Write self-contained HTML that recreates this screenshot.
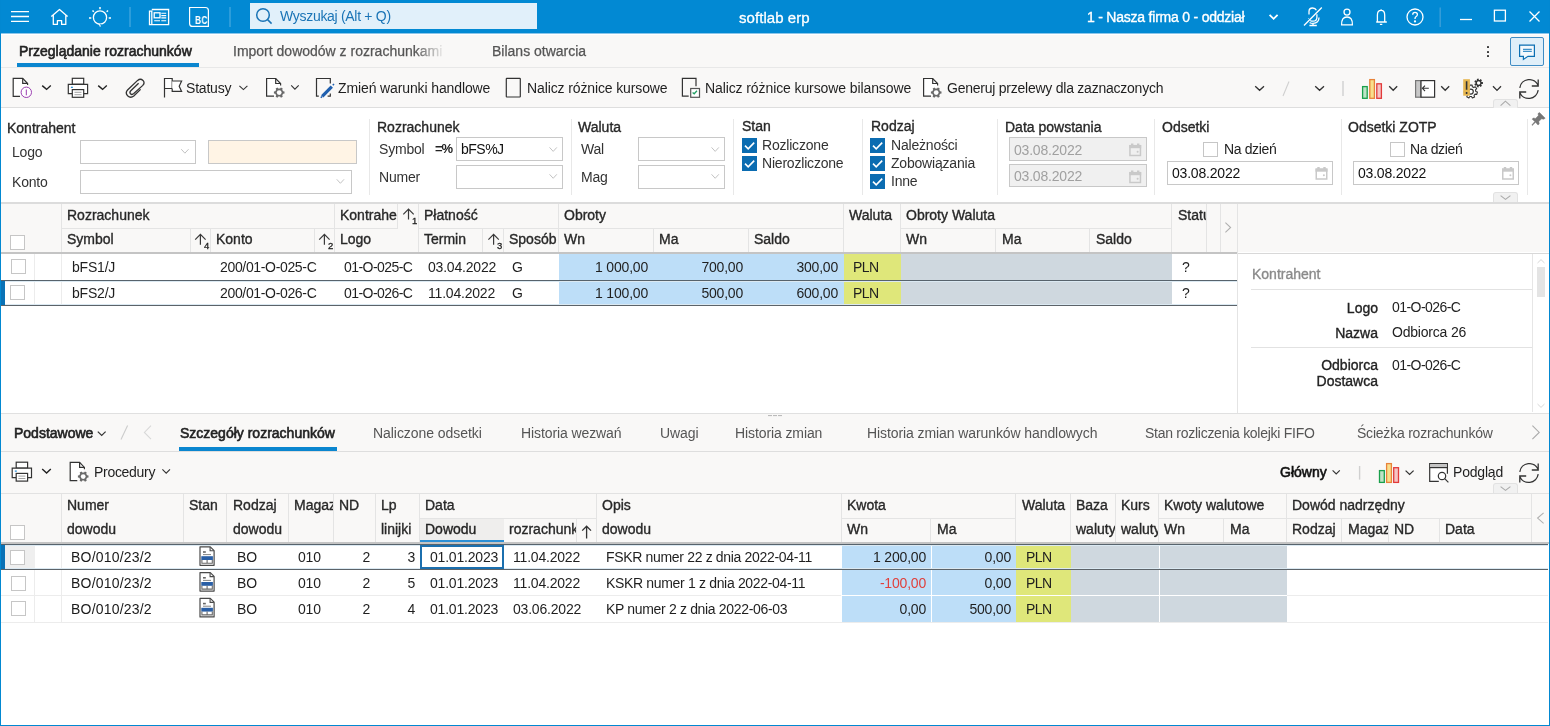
<!DOCTYPE html>
<html><head><meta charset="utf-8">
<style>
html,body{margin:0;padding:0}
body{width:1550px;height:726px;position:relative;overflow:hidden;background:#fff;font-family:"Liberation Sans",sans-serif;font-size:14px;color:#1f1f1f}
.a{position:absolute}
.t{position:absolute;white-space:nowrap;line-height:16px;font-size:14px;letter-spacing:-0.2px;will-change:transform}
.m{font-size:14px;color:#282828;-webkit-text-stroke-width:0.35px;letter-spacing:0}
.mb{-webkit-text-stroke-width:0.6px}
.g{color:#555}
.r{text-align:right}
svg{position:absolute;overflow:visible}
.hl{position:absolute;height:1px;background:#e6e6e6}
.vl{position:absolute;width:1px;background:#e6e6e6}
.cb{position:absolute;width:13px;height:13px;border:1px solid #c6c6c6;background:#fff}
.cbc{position:absolute;width:15px;height:15px;background:#0b6cb1}
.inp{position:absolute;border:1px solid #c8c8c8;background:#fff;box-sizing:border-box}
.chev{position:absolute}
</style></head><body>

<!-- window border -->
<div class="a" style="left:0;top:0;width:1px;height:726px;background:#0288d1;z-index:50"></div>
<div class="a" style="left:1549px;top:0;width:1px;height:726px;background:#0288d1;z-index:50"></div>
<div class="a" style="left:0;top:725px;width:1550px;height:1px;background:#0288d1;z-index:50"></div>

<!-- TITLE BAR -->

<div class="a" style="left:0;top:0;width:1550px;height:33px;background:#0289d3"></div>
<svg style="left:0;top:0" width="1550" height="33" fill="none" stroke="#fff" stroke-width="1.3">
 <path d="M11 11.6H29M11 16.5H29M11 21.3H29"/>
 <path d="M51.3 16.6L59.5 9.4L67.6 16.6M53.3 15V24.4H57.4V20.6H61.6V24.4H65.8V15" stroke-linejoin="round"/>
 <circle cx="100" cy="17.5" r="6.6"/>
 <path d="M100 7V9.2M92.5 10.5L93.8 11.8M108 10.5L106.7 11.8M89 18H91.3M108.7 18H111" stroke-width="1.5"/>
 <path d="M100 24.3L100.8 26.6" stroke="#0289d3" stroke-width="2.4"/>
 <path d="M98.6 24.2Q100.3 24.6 100.2 26.6"/>
 <path d="M130 7V27M230 7V27" stroke="#4aaae0" stroke-width="1.2"/>
 <path d="M151.8 9.5H168.6V24.6H149.5V11.2H151.8V24.6"/>
 <rect x="154.2" y="12.8" width="5.8" height="5" />
 <path d="M161.3 13.2H166.2M161.3 15.6H166.2M161.3 17.9H166.2M154.2 20.8H160M161.3 20.8H166.2" stroke-width="1.1"/>
 <path d="M189.6 7.5H205.4Q208.4 7.5 208.4 10.5V26.4H192.6Q189.6 26.4 189.6 23.4Z" stroke-width="1.2"/>
 <path d="M1304 25.5L1321.8 7.5"/>
 <path d="M1309 14.5V11.5Q1309 8 1312.6 8Q1315.4 8 1316.4 10.2M1316.9 14.2V17.4Q1316.9 21 1313 21.2Q1311.2 21.2 1310.2 20.4M1308.6 18.2L1308.4 18.6"/>
 <path d="M1319 17.6Q1319 23.2 1313 23.4Q1310.9 23.4 1309.6 22.4M1313 23.4V25.4M1309.4 25.5H1316.8"/>
 <circle cx="1347" cy="12.1" r="3"/>
 <path d="M1341.6 24.9H1352.4Q1352.6 17 1347 17Q1341.4 17 1341.6 24.9Z"/>
 <path d="M1376.2 22H1386.8M1377.4 22V15.2Q1377.4 10.4 1381.1 10.4Q1384.7 10.4 1384.7 15.2V22M1381.1 9.2V10.4M1379.9 24.4H1382.3"/>
 <circle cx="1415" cy="17" r="8"/>
 <path d="M1412.7 14.8Q1412.7 12.4 1415 12.4Q1417.4 12.4 1417.4 14.6Q1417.4 16 1415.9 16.8Q1415 17.4 1415 18.9"/>
 <circle cx="1415" cy="21.4" r="0.5" fill="#fff"/>
 <path d="M1440.2 7.5V27" stroke="#3a9fd9" stroke-width="1.4"/>
 <path d="M1460 19.5H1472"/>
 <rect x="1494.4" y="10.2" width="11" height="10.8"/>
 <path d="M1529.5 11.5L1539.5 21.5M1539.5 11.5L1529.5 21.5"/>
 <path d="M1269.6 14.8L1273.6 18.8L1277.6 14.8" stroke-width="1.8"/>
</svg>
<div class="t" style="left:195px;top:15.5px;font-size:10px;font-weight:bold;color:#fff;line-height:10px;letter-spacing:0.2px;transform:scaleX(0.84);transform-origin:0 0">BC</div>
<div class="a" style="left:250px;top:3px;width:287px;height:26px;background:#e1f0fa"></div>
<svg style="left:0;top:0" width="600" height="33" fill="none" stroke="#1a74b6" stroke-width="1.5">
 <circle cx="263" cy="15" r="6.3"/><path d="M267.6 19.6L271.6 23.6"/>
</svg>
<div class="t" style="left:280px;top:8px;color:#1a74b6;font-size:14px;letter-spacing:-0.3px">Wyszukaj (Alt + Q)</div>
<div class="t" style="left:739px;top:9.6px;color:#fff;font-size:15px;letter-spacing:0.05px;-webkit-text-stroke-width:0.3px">softlab erp</div>
<div class="t" style="left:1087px;top:9px;color:#fff;font-size:14px;letter-spacing:-0.22px;-webkit-text-stroke-width:0.35px">1 - Nasza firma 0 - oddział</div>


<!-- TABS -->
<div class="a" style="left:1px;top:33px;width:1548px;height:34px;background:#f9f8f7"></div>
<div class="hl" style="left:1px;top:67px;width:1548px;background:#e8e8e8"></div>

<!-- TOOLBAR -->
<div class="a" style="left:1px;top:68px;width:1548px;height:39px;background:#f9f8f7"></div>
<div class="a" style="left:1px;top:107px;width:1548px;height:1px;background:#dedede"></div>


<!-- tabs content -->
<div class="a" style="left:1px;top:33px;width:1548px;height:1px;background:#8cc6ea"></div><div class="a" style="left:1px;top:34px;width:1548px;height:1px;background:#fff"></div>
<div class="t m mb" style="left:19px;top:42.6px;color:#222">Przeglądanie rozrachunków</div>
<div class="a" style="left:17px;top:63px;width:182px;height:4px;background:#0b86cf"></div>
<div class="t g" style="left:233px;top:43px;-webkit-mask-image:linear-gradient(90deg,#000 182px,rgba(0,0,0,0.12) 209px);color:#555;letter-spacing:0;-webkit-text-stroke-width:0.25px">Import dowodów z rozrachunkami</div>
<div class="t g" style="left:492px;top:43px;letter-spacing:0;-webkit-text-stroke-width:0.25px">Bilans otwarcia</div>
<div class="a" style="left:1487px;top:46px;width:2.2px;height:2.2px;background:#3a3a3a;border-radius:0.6px"></div>
<div class="a" style="left:1487px;top:50.5px;width:2.2px;height:2.2px;background:#3a3a3a;border-radius:0.6px"></div>
<div class="a" style="left:1487px;top:55px;width:2.2px;height:2.2px;background:#3a3a3a;border-radius:0.6px"></div>
<div class="a" style="left:1510px;top:37px;width:34px;height:29px;box-sizing:border-box;border:1px solid #3f8cc4;border-radius:2px;background:#e0eff9"></div>
<svg style="left:0;top:0" width="1550" height="110" fill="none" stroke="#0b6fb3" stroke-width="1.2">
 <path d="M1519.6 45.2H1534.4V56.3H1528L1523.4 59.4V56.3H1519.6Z" fill="#f4f9fd"/>
 <path d="M1523 49.4H1531.8M1523 51.3H1531.8" stroke="#3d91c9"/>
</svg>

<!-- toolbar icons -->
<svg style="left:0;top:0" width="1550" height="110" fill="none" stroke="#333" stroke-width="1.2">
 <!-- doc info -->
 <path d="M20 96.3H13.2V78.3H22.7L27.6 83.6V85" fill="#fff"/>
 <path d="M22.7 78.3V83.3H27.4"/>
 <circle cx="26.3" cy="92.3" r="5.2" stroke="#9a3db0" fill="#fff" stroke-width="1"/>
 <path d="M26.3 89.5V95.3" stroke="#9a3db0" stroke-width="1"/>
 <path d="M42.2 85.6L46.6 89.4L50.8 85.6" stroke="#222" stroke-width="1.4"/>
 <!-- printer -->
 <rect x="72.3" y="78.3" width="11.4" height="6" fill="#fff"/>
 <path d="M72.3 93.7H68.3V84.4H87.6V93.7H83.7" fill="#fff"/>
 <rect x="72.3" y="89.6" width="11.4" height="7.7" fill="#fff"/>
 <path d="M74.5 92.3H81.5M74.5 94.7H81.5" stroke="#999" stroke-width="0.9"/>
 <path d="M70.9 87.3H72.9" stroke="#1b86d0" stroke-width="1.2"/>
 <path d="M98.2 85.6L102.6 89.4L106.8 85.6" stroke="#222" stroke-width="1.4"/>
 <!-- paperclip -->
 <path d="M140.6 89.4L133.8 96Q130.6 98.6 127.6 95.8Q124.8 92.8 127.8 89.8L137.6 80.4Q140.4 78 143 80.4Q145.2 83 142.8 85.4L133.8 93.6Q131.9 95.2 130.5 93.8Q129.2 92.4 130.8 90.8L138.6 83.2" stroke-width="1.3"/>
 <!-- flag -->
 <path d="M164.5 97.5V78.5H172.2V88.5H164.5" fill="#fff"/>
 <path d="M172.2 81H181.6L179.2 86.2L181.6 91.4H172.2V88.5" fill="#fff"/>
 <path d="M239.4 85.8L243.4 89.6L247.4 85.8" stroke="#333" stroke-width="1.1"/>
 <!-- doc gear -->
 <path d="M274 96.2H266.6V78.5H275.7L280.6 83.5V85.4" fill="#fff"/>
 <path d="M275.7 78.5V83.5H280.4"/>
 <path d="M291.2 85.3L294.9 89.2L298.7 85.3" stroke-width="1.1"/>
 <!-- doc pen -->
 <path d="M318.8 96.2H316.5V78.5H330.3V83.5M327.6 96.2H330.3V93.6"/>
 <path d="M322.2 96.4L331.8 86.6" stroke="#1f5fae" stroke-width="3.2"/>
 <path d="M320.8 97.8L322 96.5M332.8 85.2L334 84" stroke="#1f5fae" stroke-width="1.6"/>
 <!-- doc rect -->
 <rect x="506.3" y="78.4" width="14" height="18.6" rx="0.5"/>
 <!-- doc check -->
 <path d="M688.7 96.2H682.4V78.4H696V86.3"/>
 <rect x="690.7" y="88.5" width="8.8" height="8.8" fill="#fff" stroke="#555"/>
 <path d="M692.6 92.4L694.2 93.8L697 90.8" stroke="#22a064" stroke-width="1.3"/>
 <!-- doc gear 2 -->
 <path d="M931 96.2H923.6V78.5H932.7L937.6 83.5V85.4" fill="#fff"/>
 <path d="M932.7 78.5V83.5H937.4"/>
 <!-- right chevrons -->
 <path d="M1255.2 86.2L1259.6 90.3L1264 86.2M1315.2 86.2L1319.6 90.3L1324 86.2M1389.2 86.2L1393.2 90.3L1397.2 86.2M1441.2 86.2L1445.2 90.3L1449.2 86.2M1493 86.2L1497 90.4L1501 86.2" stroke="#333" stroke-width="1.3"/>
 <path d="M1289 81.5L1283 96" stroke="#d0d0d0" stroke-width="1.1"/>
 <path d="M1343 81V96" stroke="#d0d0d0" stroke-width="1.4"/>
 <!-- chart -->
 <rect x="1362.6" y="86.6" width="4.6" height="11.7" fill="#bfe3c7" stroke="#1aa04c" stroke-width="1.3"/>
 <rect x="1369.8" y="79.6" width="4.6" height="18.7" fill="#f8df8c" stroke="#e8833a" stroke-width="1.3"/>
 <rect x="1376.8" y="83.8" width="4.6" height="14.5" fill="#f5c4c4" stroke="#e23a3a" stroke-width="1.3"/>
 <!-- panel -->
 <rect x="1415.6" y="80.6" width="5.4" height="16.6" fill="#c8c8c8" stroke="#777"/>
 <rect x="1421" y="80.6" width="13.6" height="16.6" fill="#fff" stroke="#333"/>
 <path d="M1428.8 88.3H1422.6M1425 85.6L1422.4 88.3L1425 91" stroke="#333" stroke-width="1.1"/>
 <!-- refresh -->
 <path d="M1519.8 87.8A9.6 9.6 0 0 1 1538.2 85.6M1538.2 79.4V86H1531.8" stroke="#333" stroke-width="1.3"/>
 <path d="M1538.2 90.2A9.6 9.6 0 0 1 1519.8 92.4M1519.8 98.6V92H1526.2" stroke="#333" stroke-width="1.3"/>
</svg>
<!-- gears (toolbar) -->
<svg style="left:0;top:0" width="1550" height="110">
 <g transform="translate(279.2 92.6)" fill="#6a6a6a"><path id="gearp" d="M3.90 -1.27L5.30 -1.01L5.30 1.01L3.90 1.27L3.05 2.74L3.53 4.09L1.78 5.10L0.85 4.01L-0.85 4.01L-1.78 5.10L-3.53 4.09L-3.05 2.74L-3.90 1.27L-5.30 1.01L-5.30 -1.01L-3.90 -1.27L-3.05 -2.74L-3.53 -4.09L-1.78 -5.10L-0.85 -4.01L0.85 -4.01L1.78 -5.10L3.53 -4.09L3.05 -2.74Z"/><circle r="2.4" fill="#fff"/></g>
 <g transform="translate(936.2 92.6)" fill="#6a6a6a"><use href="#gearp"/><circle r="2.4" fill="#fff"/></g>
 <path d="M1475.80 91.41L1477.38 92.06L1476.80 94.35L1475.10 94.16L1474.06 95.39L1474.54 97.04L1472.39 98.01L1471.48 96.55L1469.87 96.51L1468.88 97.92L1466.79 96.84L1467.35 95.22L1466.38 93.94L1464.67 94.04L1464.20 91.73L1465.82 91.16L1466.22 89.60L1465.07 88.32L1466.59 86.52L1468.04 87.43L1469.51 86.77L1469.79 85.08L1472.14 85.14L1472.34 86.84L1473.77 87.58L1475.27 86.74L1476.69 88.62L1475.48 89.84Z" fill="#fff" stroke="#333" stroke-width="1.1" stroke-linejoin="round"/>
 <circle cx="1470.8" cy="91.6" r="2.5" fill="none" stroke="#333" stroke-width="1.2"/>
 <path d="M1481.55 82.06L1482.91 82.12L1482.91 83.88L1481.55 83.94L1481.18 84.72L1481.98 85.82L1480.60 86.92L1479.70 85.90L1478.86 86.09L1478.50 87.40L1476.78 87.01L1477.02 85.67L1476.35 85.13L1475.10 85.67L1474.33 84.08L1475.53 83.43L1475.53 82.57L1474.33 81.92L1475.10 80.33L1476.35 80.87L1477.02 80.33L1476.78 78.99L1478.50 78.60L1478.86 79.91L1479.70 80.10L1480.60 79.08L1481.98 80.18L1481.18 81.28Z" fill="#333"/>
 <circle cx="1478.6" cy="83" r="1.7" fill="#fff"/>
 <rect x="1463.2" y="79.2" width="6.7" height="16.5" fill="#e6b650"/>
 <path d="M1466.6 81.2V89.8M1466.6 92V94" stroke="#333" stroke-width="1.6"/>
</svg>
<div class="a" style="left:1493px;top:99px;width:25px;height:9px;box-sizing:border-box;border:1px solid #e2e2e2;border-bottom:none;border-radius:3px 3px 0 0;background:#f1f1f1"></div>
<svg style="left:0;top:0" width="1550" height="110" fill="none"><path d="M1500.6 105.6L1505.4 101.2L1510.4 105.6" stroke="#aaa" stroke-width="1.1"/></svg>
<div class="t" style="left:186px;top:80px">Statusy</div>
<div class="t" style="left:338px;top:80px;letter-spacing:-0.12px">Zmień warunki handlowe</div>
<div class="t" style="left:527px;top:80px;letter-spacing:-0.12px">Nalicz różnice kursowe</div>
<div class="t" style="left:704.5px;top:80px;letter-spacing:-0.1px">Nalicz różnice kursowe bilansowe</div>
<div class="t" style="left:947px;top:80px;letter-spacing:-0.24px">Generuj przelewy dla zaznaczonych</div>

<!-- FILTER -->
<div class="t m" style="left:7.4px;top:120px">Kontrahent</div>
<div class="t" style="left:12.3px;top:144px;color:#333">Logo</div>
<div class="inp" style="left:80px;top:140px;width:116px;height:24px;background:#fff"></div>
<div class="inp" style="left:208px;top:140px;width:149px;height:24px;background:#fff4e5"></div>
<div class="t" style="left:12.3px;top:174px;color:#333">Konto</div>
<div class="inp" style="left:80px;top:170px;width:272px;height:24px;background:#fff"></div>
<div class="t m" style="left:376.7px;top:119.3px">Rozrachunek</div>
<div class="t" style="left:379px;top:141px;color:#333">Symbol</div>
<div class="t" style="left:434.5px;top:141px;color:#222;font-weight:bold;font-size:13px;letter-spacing:-1.2px">=%</div>
<div class="inp" style="left:456px;top:137px;width:107px;height:24px;background:#fff"></div>
<div class="t" style="left:461px;top:141px;color:#111;letter-spacing:-0.5px">bFS%J</div>
<div class="t" style="left:379px;top:169px;color:#333">Numer</div>
<div class="inp" style="left:456px;top:165px;width:107px;height:24px;background:#fff"></div>
<div class="t m" style="left:578px;top:119.3px">Waluta</div>
<div class="t" style="left:580.6px;top:141px;color:#333">Wal</div>
<div class="inp" style="left:638px;top:137px;width:87px;height:24px;background:#fff"></div>
<div class="t" style="left:580.6px;top:169px;color:#333">Mag</div>
<div class="inp" style="left:638px;top:165px;width:87px;height:24px;background:#fff"></div>
<div class="t m" style="left:742px;top:118.3px">Stan</div>
<div class="t m" style="left:870.6px;top:118.3px">Rodzaj</div>
<div class="cbc" style="left:742px;top:138px"></div>
<div class="cbc" style="left:742px;top:156px"></div>
<div class="cbc" style="left:870px;top:138px"></div>
<div class="cbc" style="left:870px;top:156px"></div>
<div class="cbc" style="left:870px;top:174px"></div>
<div class="t" style="left:762px;top:136.6px;color:#333">Rozliczone</div>
<div class="t" style="left:762px;top:155px;color:#333">Nierozliczone</div>
<div class="t" style="left:890.6px;top:136.6px;color:#333">Należności</div>
<div class="t" style="left:890.6px;top:155px;color:#333">Zobowiązania</div>
<div class="t" style="left:890.6px;top:173px;color:#333">Inne</div>
<div class="t m" style="left:1004.6px;top:119px">Data powstania</div>
<div class="inp" style="left:1009px;top:137px;width:138px;height:24px;background:#f0f0f0"></div>
<div class="inp" style="left:1009px;top:164px;width:138px;height:23px;background:#f0f0f0"></div>
<div class="t" style="left:1014px;top:141.5px;color:#a0a0a0">03.08.2022</div>
<div class="t" style="left:1014px;top:168px;color:#a0a0a0">03.08.2022</div>
<div class="t m" style="left:1161.7px;top:119px">Odsetki</div>
<div class="cb" style="left:1203px;top:142px"></div>
<div class="t" style="left:1224px;top:140.6px;color:#222;letter-spacing:-0.37px">Na dzień</div>
<div class="inp" style="left:1167px;top:161px;width:166px;height:24px"></div>
<div class="t" style="left:1171.8px;top:165px;color:#111">03.08.2022</div>
<div class="t m" style="left:1347.7px;top:119px">Odsetki ZOTP</div>
<div class="cb" style="left:1390px;top:142px"></div>
<div class="t" style="left:1410px;top:140.6px;color:#222;letter-spacing:-0.37px">Na dzień</div>
<div class="inp" style="left:1353px;top:161px;width:166px;height:24px"></div>
<div class="t" style="left:1357.8px;top:165px;color:#111">03.08.2022</div>
<div class="vl" style="left:369px;top:119px;height:76px;background:#e8e8e8"></div>
<div class="vl" style="left:571px;top:119px;height:76px;background:#e8e8e8"></div>
<div class="vl" style="left:733px;top:119px;height:76px;background:#e8e8e8"></div>
<div class="vl" style="left:862px;top:119px;height:76px;background:#e8e8e8"></div>
<div class="vl" style="left:997px;top:119px;height:76px;background:#e8e8e8"></div>
<div class="vl" style="left:1154px;top:119px;height:76px;background:#e8e8e8"></div>
<div class="vl" style="left:1341px;top:119px;height:76px;background:#e8e8e8"></div>
<div class="vl" style="left:1527px;top:119px;height:76px;background:#e8e8e8"></div>
<svg style="left:0;top:0" width="1550" height="210" fill="none" stroke="#c2c2c2" stroke-width="1"><path d="M181.25 149.20L184.90 153.20L188.55 149.20"/><path d="M336.75 179.30L340.40 183.30L344.05 179.30"/><path d="M549.55 147.40L553.20 151.40L556.85 147.40"/><path d="M549.55 174.30L553.20 178.30L556.85 174.30"/><path d="M711.55 147.40L715.20 151.40L718.85 147.40"/><path d="M711.55 174.30L715.20 178.30L718.85 174.30"/><path d="M745 145.6L748.2 148.8L754.2 142.6" stroke="#fff" stroke-width="1.6"/><path d="M745 163.6L748.2 166.8L754.2 160.6" stroke="#fff" stroke-width="1.6"/><path d="M873 145.6L876.2 148.8L882.2 142.6" stroke="#fff" stroke-width="1.6"/><path d="M873 163.6L876.2 166.8L882.2 160.6" stroke="#fff" stroke-width="1.6"/><path d="M873 181.6L876.2 184.8L882.2 178.6" stroke="#fff" stroke-width="1.6"/></svg>
<svg style="left:0;top:0" width="1550" height="210"><g fill="#777" stroke="#777"><path d="M1539.5 112.6L1545.2 118.2L1543.6 119.2L1541.5 118.8L1538.8 121.6L1539.2 124L1538 125L1535.6 122.3L1532.2 125.4L1531.8 125L1534.8 121.6L1532.2 119.2L1533.2 118L1535.6 118.4L1538.4 115.6L1538 113.6Z" stroke-width="0.5"/></g></svg>
<div class="a" style="left:1493px;top:192px;width:25px;height:10px;box-sizing:border-box;border:1px solid #e2e2e2;border-bottom:none;border-radius:3px 3px 0 0;background:#f1f1f1"></div>
<svg style="left:0;top:0" width="1550" height="210" fill="none"><path d="M1500.6 195.6L1505.5 199.4L1510.4 195.6" stroke="#aaa" stroke-width="1.1"/></svg>
<div class="a" style="left:1px;top:202px;width:1548px;height:2px;background:#dcdcdc"></div>

<!-- GRID1 HEADER -->
<div class="a" style="left:1px;top:204px;width:1548px;height:48px;background:#f9f8f7"></div>
<div class="a" style="left:1px;top:252px;width:1237px;height:2px;background:#c4c4c4"></div>

<svg style="left:0;top:0" width="1550" height="210"><rect x="1129.95" y="145.7" width="10.5" height="9.8" fill="none" stroke="#c9c9c9" stroke-width="1.5"/><rect x="1129.2" y="145.0" width="12" height="3.2" fill="#c9c9c9"/><rect x="1131.0" y="143.5" width="2.4" height="2" fill="#c9c9c9"/><rect x="1137.0" y="143.5" width="2.4" height="2" fill="#c9c9c9"/><circle cx="1137.6000000000001" cy="151.7" r="1" fill="#c9c9c9"/><rect x="1129.95" y="172.7" width="10.5" height="9.8" fill="none" stroke="#c9c9c9" stroke-width="1.5"/><rect x="1129.2" y="172.0" width="12" height="3.2" fill="#c9c9c9"/><rect x="1131.0" y="170.5" width="2.4" height="2" fill="#c9c9c9"/><rect x="1137.0" y="170.5" width="2.4" height="2" fill="#c9c9c9"/><circle cx="1137.6000000000001" cy="178.7" r="1" fill="#c9c9c9"/><rect x="1316.25" y="169.2" width="10.5" height="9.8" fill="none" stroke="#c9c9c9" stroke-width="1.5"/><rect x="1315.5" y="168.5" width="12" height="3.2" fill="#c9c9c9"/><rect x="1317.3" y="167" width="2.4" height="2" fill="#c9c9c9"/><rect x="1323.3" y="167" width="2.4" height="2" fill="#c9c9c9"/><circle cx="1323.9" cy="175.2" r="1" fill="#c9c9c9"/><rect x="1502.75" y="169.2" width="10.5" height="9.8" fill="none" stroke="#c9c9c9" stroke-width="1.5"/><rect x="1502" y="168.5" width="12" height="3.2" fill="#c9c9c9"/><rect x="1503.8" y="167" width="2.4" height="2" fill="#c9c9c9"/><rect x="1509.8" y="167" width="2.4" height="2" fill="#c9c9c9"/><circle cx="1510.4" cy="175.2" r="1" fill="#c9c9c9"/></svg>
<!-- GRID1 -->

<div class="vl" style="left:61px;top:204px;height:48px;background:#e4e4e4"></div>
<div class="vl" style="left:190px;top:228px;height:24px;background:#e4e4e4"></div>
<div class="vl" style="left:210px;top:228px;height:24px;background:#e4e4e4"></div>
<div class="vl" style="left:314px;top:228px;height:24px;background:#e4e4e4"></div>
<div class="vl" style="left:334px;top:204px;height:48px;background:#e4e4e4"></div>
<div class="vl" style="left:397px;top:204px;height:24px;background:#e4e4e4"></div>
<div class="vl" style="left:418px;top:204px;height:48px;background:#e4e4e4"></div>
<div class="vl" style="left:482px;top:228px;height:24px;background:#e4e4e4"></div>
<div class="vl" style="left:503px;top:228px;height:24px;background:#e4e4e4"></div>
<div class="vl" style="left:558px;top:204px;height:48px;background:#e4e4e4"></div>
<div class="vl" style="left:653px;top:228px;height:24px;background:#e4e4e4"></div>
<div class="vl" style="left:748px;top:228px;height:24px;background:#e4e4e4"></div>
<div class="vl" style="left:843px;top:204px;height:48px;background:#e4e4e4"></div>
<div class="vl" style="left:900px;top:204px;height:48px;background:#e4e4e4"></div>
<div class="vl" style="left:995px;top:228px;height:24px;background:#e4e4e4"></div>
<div class="vl" style="left:1089px;top:228px;height:24px;background:#e4e4e4"></div>
<div class="vl" style="left:1171px;top:204px;height:48px;background:#e4e4e4"></div>
<div class="vl" style="left:1206px;top:204px;height:48px;background:#e4e4e4"></div>
<div class="vl" style="left:1220px;top:204px;height:48px;background:#e4e4e4"></div>
<div class="vl" style="left:1237px;top:204px;height:209px;background:#e4e4e4"></div>
<div class="hl" style="left:61px;top:228px;width:273.5px;background:#e4e4e4"></div>
<div class="hl" style="left:418.5px;top:228px;width:140.0px;background:#e4e4e4"></div>
<div class="hl" style="left:558.5px;top:228px;width:285.0px;background:#e4e4e4"></div>
<div class="hl" style="left:900.5px;top:228px;width:271.0px;background:#e4e4e4"></div>
<div class="hl" style="left:334.5px;top:228px;width:63px;background:#e4e4e4"></div>
<div class="t m" style="left:67.3px;top:207.2px;">Rozrachunek</div>
<div class="t m" style="left:67.3px;top:231.4px;">Symbol</div>
<div class="t m" style="left:216.4px;top:231.4px;">Konto</div>
<div class="a" style="left:335px;top:204px;width:62px;height:24px;overflow:hidden"><div class="t m" style="left:5.4px;top:3.2px">Kontrahent</div></div>
<div class="t m" style="left:340.4px;top:231.4px;">Logo</div>
<div class="t m" style="left:424px;top:207.2px;">Płatność</div>
<div class="t m" style="left:424px;top:231.4px;">Termin</div>
<div class="t m" style="left:508.8px;top:231.4px;">Sposób</div>
<div class="t m" style="left:563.5px;top:207.2px;">Obroty</div>
<div class="t m" style="left:564px;top:231.4px;">Wn</div>
<div class="t m" style="left:659px;top:231.4px;">Ma</div>
<div class="t m" style="left:754px;top:231.4px;">Saldo</div>
<div class="t m" style="left:849px;top:207.2px;">Waluta</div>
<div class="t m" style="left:906.3px;top:207.2px;">Obroty Waluta</div>
<div class="t m" style="left:906.3px;top:231.4px;">Wn</div>
<div class="t m" style="left:1001.5px;top:231.4px;">Ma</div>
<div class="t m" style="left:1095.5px;top:231.4px;">Saldo</div>
<div class="a" style="left:1172px;top:204px;width:34px;height:24px;overflow:hidden"><div class="t m" style="left:5.5px;top:3.2px">Status</div></div>
<div class="cb" style="left:10px;top:235px"></div>
<svg style="left:0;top:0" width="1550" height="420" fill="none" stroke="#3a3a3a" stroke-width="1.2"><path d="M200.4 244.79999999999998V234.5M195.20000000000002 239.6L200.4 234.39999999999998L205.6 239.6"/><path d="M324.4 244.79999999999998V234.5M319.2 239.6L324.4 234.39999999999998L329.59999999999997 239.6"/><path d="M408.5 219.6V209.3M403.3 214.4L408.5 209.2L413.7 214.4"/><path d="M493.6 244.79999999999998V234.5M488.40000000000003 239.6L493.6 234.39999999999998L498.8 239.6"/><path d="M1225.4 222.6L1230.6 227.5L1225.4 232.4" stroke="#b0b0b0" stroke-width="1.1"/></svg>
<div class="t" style="left:204.2px;top:241.4px;font-size:9.5px;line-height:10px;color:#222;-webkit-text-stroke-width:0.3px;letter-spacing:0">4</div><div class="t" style="left:328.2px;top:241.4px;font-size:9.5px;line-height:10px;color:#222;-webkit-text-stroke-width:0.3px;letter-spacing:0">2</div><div class="t" style="left:411.6px;top:216.2px;font-size:9.5px;line-height:10px;color:#222;-webkit-text-stroke-width:0.3px;letter-spacing:0">1</div><div class="t" style="left:497px;top:241.4px;font-size:9.5px;line-height:10px;color:#222;-webkit-text-stroke-width:0.3px;letter-spacing:0">3</div>




<div class="a" style="left:558.5px;top:254px;width:285px;height:51px;background:#bddef8"></div>
<div class="a" style="left:843.5px;top:254px;width:57px;height:51px;background:#dfe77a"></div>
<div class="a" style="left:900.5px;top:254px;width:271px;height:51px;background:#cfd8df"></div>
<div class="vl" style="left:34px;top:254px;height:51px;background:#ececec"></div>
<div class="vl" style="left:61px;top:254px;height:51px;background:#ececec"></div>
<div class="a" style="left:1px;top:280px;width:1236px;height:1px;background:#57636c"></div><div class="a" style="left:5px;top:281px;width:1232px;height:1px;background:#dbe9f2"></div><div class="a" style="left:5px;top:304px;width:1232px;height:1px;background:#dbe9f2"></div>
<div class="a" style="left:1px;top:305px;width:1236px;height:1px;background:#5c6369"></div>
<div class="a" style="left:1px;top:281px;width:4px;height:24px;background:#0a72b6"></div>
<div class="cb" style="left:11px;top:259px"></div>
<div class="cb" style="left:10px;top:285px"></div>
<div class="t" style="left:71.6px;top:259.2px;">bFS1/J</div>
<div class="t" style="left:220.4px;top:259.2px;letter-spacing:-0.34px;">200/01-O-025-C</div>
<div class="t" style="left:343.5px;top:259.2px;letter-spacing:-0.55px;">01-O-025-C</div>
<div class="t" style="left:427.5px;top:259.2px;">03.04.2022</div>
<div class="t" style="left:512.2px;top:259.2px;">G</div>
<div class="t" style="left:448px;width:200px;text-align:right;top:259.2px;">1 000,00</div>
<div class="t" style="left:542.7px;width:200px;text-align:right;top:259.2px;">700,00</div>
<div class="t" style="left:638px;width:200px;text-align:right;top:259.2px;">300,00</div>
<div class="t" style="left:852.6px;top:259.2px;letter-spacing:-0.6px;">PLN</div>
<div class="t" style="left:1181.5px;top:259.2px;">?</div>
<div class="t" style="left:71.6px;top:285px;">bFS2/J</div>
<div class="t" style="left:220.4px;top:285px;letter-spacing:-0.34px;">200/01-O-026-C</div>
<div class="t" style="left:343.5px;top:285px;letter-spacing:-0.55px;">01-O-026-C</div>
<div class="t" style="left:427.5px;top:285px;">11.04.2022</div>
<div class="t" style="left:512.2px;top:285px;">G</div>
<div class="t" style="left:448px;width:200px;text-align:right;top:285px;">1 100,00</div>
<div class="t" style="left:542.7px;width:200px;text-align:right;top:285px;">500,00</div>
<div class="t" style="left:638px;width:200px;text-align:right;top:285px;">600,00</div>
<div class="t" style="left:852.6px;top:285px;letter-spacing:-0.6px;">PLN</div>
<div class="t" style="left:1181.5px;top:285px;">?</div>
<div class="a" style="left:1238px;top:253px;width:311px;height:1px;background:#d8d8d8"></div>
<div class="a" style="left:1238px;top:254px;width:311px;height:159px;background:#fff"></div>
<div class="t m" style="left:1251.5px;top:265.7px;color:#8a8a8a">Kontrahent</div>
<div class="hl" style="left:1251px;top:289px;width:281px;background:#e2e2e2"></div>
<div class="hl" style="left:1251px;top:347px;width:281px;background:#e2e2e2"></div>
<div class="t m" style="left:1178px;width:200px;text-align:right;top:299.5px;color:#222">Logo</div>
<div class="t m" style="left:1178px;width:200px;text-align:right;top:324.5px;color:#222">Nazwa</div>
<div class="t m" style="left:1178px;width:200px;text-align:right;top:357.3px;color:#222">Odbiorca</div>
<div class="t m" style="left:1178px;width:200px;text-align:right;top:372.8px;color:#222">Dostawca</div>
<div class="t" style="left:1391.5px;top:299.2px;color:#222;letter-spacing:-0.55px">01-O-026-C</div>
<div class="t" style="left:1391.5px;top:324.2px;color:#222">Odbiorca 26</div>
<div class="t" style="left:1391.5px;top:357px;color:#222;letter-spacing:-0.55px">01-O-026-C</div>
<div class="vl" style="left:1532px;top:254px;height:158px;background:#e6e6e6"></div>
<div class="a" style="left:1537px;top:267px;width:8px;height:30px;background:#e4e4e4"></div>
<svg style="left:0;top:0" width="1550" height="420" fill="none" stroke="#d6d6d6" stroke-width="1"><path d="M1537.5 263L1541 259.6L1544.5 263M1537.5 404L1541 407.4L1544.5 404"/></svg>
<!-- splitter / bottom tabs -->
<div class="a" style="left:1px;top:413px;width:1548px;height:38px;background:#f9f8f7"></div>
<div class="hl" style="left:1px;top:413px;width:1548px;background:#e0e0e0"></div>
<div class="hl" style="left:1px;top:451px;width:1548px;background:#dedede"></div>
<div class="a" style="left:1px;top:452px;width:1548px;height:41px;background:#f9f8f7"></div>
<div class="hl" style="left:1px;top:493px;width:1548px;background:#e2e2e2"></div>

<!-- BOTTOM TABS+TOOLBAR -->
<div class="t m mb" style="left:13.5px;top:425px;color:#222">Podstawowe</div>
<div class="t m mb" style="left:180px;top:425px;color:#222">Szczegóły rozrachunków</div>
<div class="a" style="left:179px;top:447px;width:158px;height:4px;background:#0b86cf"></div>
<div class="t g" style="left:372.9px;top:425.2px;letter-spacing:-0.05px">Naliczone odsetki</div>
<div class="t g" style="left:521px;top:425.2px;letter-spacing:-0.1px">Historia wezwań</div>
<div class="t g" style="left:659.5px;top:425.2px;letter-spacing:-0.1px">Uwagi</div>
<div class="t g" style="left:735.3px;top:425.2px;letter-spacing:-0.1px">Historia zmian</div>
<div class="t g" style="left:867px;top:425.2px;letter-spacing:-0.09px">Historia zmian warunków handlowych</div>
<div class="t g" style="left:1144.5px;top:425.2px;letter-spacing:-0.27px">Stan rozliczenia kolejki FIFO</div>
<div class="t g" style="left:1356.8px;top:425.2px;letter-spacing:-0.22px">Ścieżka rozrachunków</div>
<svg style="left:0;top:0" width="1550" height="500" fill="none" stroke="#333" stroke-width="1.2"><path d="M97.8 431.6L101.7 435.4L105.6 431.6"/><path d="M127.6 425.4L121 439.4" stroke="#ccc" stroke-width="1.1"/><path d="M151 425.6L144.4 432.4L151 439.2" stroke="#d8d8d8" stroke-width="1.1"/><path d="M1532.4 425.6L1539.2 432.4L1532.4 439.2" stroke="#aaa" stroke-width="1.1"/><path d="M768 415.6H782" stroke="#b4b4b4" stroke-width="1" stroke-dasharray="4 1"/></svg>
<svg style="left:0;top:0" width="1550" height="500" fill="none" stroke="#333" stroke-width="1.2"><rect x="16.2" y="462.2" width="11.4" height="6" fill="#fff"/><path d="M16.2 477.6H12.2V468.2H31.5V477.6H27.6" fill="#fff"/><rect x="16.2" y="473.4" width="11.4" height="7.7" fill="#fff"/><path d="M18.4 476.1H25.4M18.4 478.5H25.4" stroke="#999" stroke-width="0.9"/><path d="M14.8 471.1H16.8" stroke="#1b86d0" stroke-width="1.2"/><path d="M42.2 469L46.6 473L50.8 469" stroke="#222" stroke-width="1.4"/><path d="M77.3 480.6H70.2V462.4H79.6L84.4 467.4V469.2" fill="#fff"/><path d="M79.6 462.4V467.4H84.2"/><path d="M162.4 469.4L166.2 473.2L170 469.4" stroke-width="1.1"/><path d="M1332.6 470.4L1336.2 474L1339.8 470.4" stroke-width="1.1"/><path d="M1359.6 466V479.6" stroke="#d0d0d0" stroke-width="1.4"/><rect x="1379.5" y="470.6" width="4.8" height="11.8" fill="#bfe3c7" stroke="#1aa04c" stroke-width="1.3"/><rect x="1386.6" y="463.6" width="4.8" height="18.8" fill="#f8df8c" stroke="#e8833a" stroke-width="1.3"/><rect x="1393.7" y="467.7" width="4.8" height="14.7" fill="#f5c4c4" stroke="#e23a3a" stroke-width="1.3"/><path d="M1405.6 470.6L1409.6 474.4L1413.6 470.6" stroke-width="1.3"/><path d="M1438.8 481.4H1429.7V463.7H1447.4V473.8" fill="#fff"/><rect x="1430.2" y="464.2" width="16.8" height="3.2" fill="#c4c4c4" stroke="none"/><path d="M1429.7 467.6H1447.4"/><circle cx="1442" cy="476" r="3.7" fill="#fff"/><path d="M1444.7 478.7L1448.4 482.4"/><path d="M1519.8 471.8A9.6 9.6 0 0 1 1538.2 469.6M1538.2 463.4V470H1531.8" stroke-width="1.3"/><path d="M1538.2 474.2A9.6 9.6 0 0 1 1519.8 476.4M1519.8 482.6V476H1526.2" stroke-width="1.3"/></svg>
<svg style="left:0;top:0" width="1550" height="500"><g transform="translate(83.2 476.6)" fill="#6a6a6a"><use href="#gearp"/><circle r="2.4" fill="#fff"/></g></svg>
<div class="t" style="left:94px;top:464px;letter-spacing:-0.3px">Procedury</div>
<div class="t m mb" style="left:1279.6px;top:464.2px;color:#111">Główny</div>
<div class="t" style="left:1452.7px;top:464px;letter-spacing:-0.2px">Podgląd</div>
<div class="a" style="left:1493px;top:483px;width:25px;height:10px;box-sizing:border-box;border:1px solid #e2e2e2;border-bottom:none;border-radius:3px 3px 0 0;background:#f1f1f1"></div>
<svg style="left:0;top:0" width="1550" height="500" fill="none"><path d="M1500.6 486.6L1505.5 490.4L1510.4 486.6" stroke="#aaa" stroke-width="1.1"/></svg>
<!-- GRID2 HEADER -->
<div class="a" style="left:1px;top:494px;width:1548px;height:49px;background:#f9f8f7"></div>
<div class="a" style="left:1px;top:542px;width:1548px;height:2px;background:#c4c4c4"></div>

<!-- GRID2 -->

<div class="vl" style="left:61px;top:494px;height:48px;background:#e4e4e4"></div>
<div class="vl" style="left:183px;top:494px;height:48px;background:#e4e4e4"></div>
<div class="vl" style="left:226px;top:494px;height:48px;background:#e4e4e4"></div>
<div class="vl" style="left:288px;top:494px;height:48px;background:#e4e4e4"></div>
<div class="vl" style="left:333px;top:494px;height:48px;background:#e4e4e4"></div>
<div class="vl" style="left:375px;top:494px;height:48px;background:#e4e4e4"></div>
<div class="vl" style="left:419px;top:494px;height:48px;background:#e4e4e4"></div>
<div class="vl" style="left:503px;top:519px;height:23px;background:#e4e4e4"></div>
<div class="vl" style="left:576px;top:519px;height:23px;background:#e4e4e4"></div>
<div class="vl" style="left:596px;top:494px;height:48px;background:#e4e4e4"></div>
<div class="vl" style="left:841px;top:494px;height:48px;background:#e4e4e4"></div>
<div class="vl" style="left:930px;top:519px;height:23px;background:#e4e4e4"></div>
<div class="vl" style="left:1015px;top:494px;height:48px;background:#e4e4e4"></div>
<div class="vl" style="left:1070px;top:494px;height:48px;background:#e4e4e4"></div>
<div class="vl" style="left:1115px;top:494px;height:48px;background:#e4e4e4"></div>
<div class="vl" style="left:1158px;top:494px;height:48px;background:#e4e4e4"></div>
<div class="vl" style="left:1223px;top:519px;height:23px;background:#e4e4e4"></div>
<div class="vl" style="left:1286px;top:494px;height:48px;background:#e4e4e4"></div>
<div class="vl" style="left:1341px;top:519px;height:23px;background:#e4e4e4"></div>
<div class="vl" style="left:1388px;top:519px;height:23px;background:#e4e4e4"></div>
<div class="vl" style="left:1439px;top:519px;height:23px;background:#e4e4e4"></div>
<div class="vl" style="left:1531px;top:494px;height:48px;background:#e4e4e4"></div>
<div class="hl" style="left:419.5px;top:518px;width:177.0px;background:#e4e4e4"></div>
<div class="hl" style="left:841.5px;top:518px;width:174.0px;background:#e4e4e4"></div>
<div class="hl" style="left:1158.5px;top:518px;width:128.0px;background:#e4e4e4"></div>
<div class="hl" style="left:1286.5px;top:518px;width:245.0px;background:#e4e4e4"></div>
<div class="a" style="left:420px;top:519px;width:83.5px;height:23px;background:#efeeed"></div>
<div class="a" style="left:420px;top:540px;width:83.5px;height:2px;background:#2b8fd6"></div>
<div class="t m" style="left:66.5px;top:497px;">Numer</div>
<div class="t m" style="left:66.5px;top:520.9px;">dowodu</div>
<div class="t m" style="left:189.3px;top:497px;">Stan</div>
<div class="t m" style="left:232.7px;top:497px;">Rodzaj</div>
<div class="t m" style="left:232.7px;top:520.9px;">dowodu</div>
<div class="a" style="left:289px;top:494px;width:44px;height:24px;overflow:hidden"><div class="t m" style="left:5.3px;top:3px">Magazyn</div></div>
<div class="t m" style="left:338.8px;top:497px;">ND</div>
<div class="t m" style="left:381.3px;top:497px;">Lp</div>
<div class="t m" style="left:381.3px;top:520.9px;">linijki</div>
<div class="t m" style="left:425.2px;top:497px;">Data</div>
<div class="t m" style="left:425.2px;top:520.9px;color:#222">Dowodu</div>
<div class="a" style="left:504px;top:519px;width:72px;height:23px;overflow:hidden"><div class="t m" style="left:4.6px;top:1.9px">rozrachunku</div></div>
<div class="t m" style="left:602px;top:497px;">Opis</div>
<div class="t m" style="left:602px;top:520.9px;">dowodu</div>
<div class="t m" style="left:847px;top:497px;">Kwota</div>
<div class="t m" style="left:847px;top:520.9px;">Wn</div>
<div class="t m" style="left:936.8px;top:520.9px;">Ma</div>
<div class="t m" style="left:1021.6px;top:497px;">Waluta</div>
<div class="t m" style="left:1075.8px;top:497px;">Baza</div>
<div class="a" style="left:1071px;top:519px;width:44px;height:23px;overflow:hidden"><div class="t m" style="left:4.8px;top:1.9px">waluty</div></div>
<div class="t m" style="left:1121px;top:497px;">Kurs</div>
<div class="a" style="left:1116px;top:519px;width:42px;height:23px;overflow:hidden"><div class="t m" style="left:5px;top:1.9px">waluty</div></div>
<div class="t m" style="left:1164.3px;top:497px;">Kwoty walutowe</div>
<div class="t m" style="left:1164.3px;top:520.9px;">Wn</div>
<div class="t m" style="left:1229.8px;top:520.9px;">Ma</div>
<div class="t m" style="left:1292.4px;top:497px;">Dowód nadrzędny</div>
<div class="t m" style="left:1292.4px;top:520.9px;">Rodzaj</div>
<div class="a" style="left:1342px;top:519px;width:46px;height:23px;overflow:hidden"><div class="t m" style="left:5.7px;top:1.9px">Magazyn</div></div>
<div class="t m" style="left:1393.5px;top:520.9px;">ND</div>
<div class="t m" style="left:1445px;top:520.9px;">Data</div>
<div class="cb" style="left:10px;top:525px"></div>
<svg style="left:0;top:0" width="1550" height="726" fill="none" stroke="#333" stroke-width="1.3"><path d="M586.6 538.6V526.2M582.2 530.6L586.6 526.2L591 530.6"/><path d="M1543.6 512.8L1537.6 518.1L1543.6 523.4" stroke="#b0b0b0" stroke-width="1.1"/></svg>
<div class="a" style="left:841.5px;top:544px;width:174px;height:78px;background:#bddef8"></div>
<div class="a" style="left:1015.5px;top:544px;width:55px;height:78px;background:#dfe77a"></div>
<div class="a" style="left:1070.5px;top:544px;width:216px;height:78px;background:#cfd8df"></div>
<div class="a" style="left:930.5px;top:544px;width:1.2px;height:78px;background:#fff"></div>
<div class="a" style="left:1158.5px;top:544px;width:1.2px;height:78px;background:#fff"></div>
<div class="a" style="left:841.5px;top:595px;width:445px;height:1.2px;background:#fff"></div>
<div class="vl" style="left:34px;top:544px;height:78px;background:#ececec"></div>
<div class="vl" style="left:61px;top:544px;height:78px;background:#ececec"></div>
<div class="hl" style="left:1px;top:595px;width:840px;background:#ececec"></div>
<div class="hl" style="left:1287px;top:595px;width:261px;background:#ececec"></div>
<div class="hl" style="left:1px;top:621.5px;width:1547px;background:#ececec"></div>
<div class="a" style="left:5px;top:546px;width:30px;height:22px;background:#efefef"></div>
<div class="a" style="left:1px;top:544px;width:1547px;height:1px;background:#57636c"></div><div class="a" style="left:5px;top:545px;width:1543px;height:1px;background:#dbe9f2"></div><div class="a" style="left:5px;top:568px;width:1543px;height:1px;background:#dbe9f2"></div>
<div class="a" style="left:1px;top:569px;width:1547px;height:1px;background:#5c6369"></div>
<div class="a" style="left:1px;top:545px;width:4px;height:24px;background:#0a72b6"></div>
<div class="a" style="left:420px;top:545px;width:83.5px;height:24px;box-sizing:border-box;border:2px solid #1b6fae"></div>

<div class="cb" style="left:10.2px;top:550px"></div>
<div class="t" style="left:70.8px;top:549.2px;color:#1a1a1a;letter-spacing:0.2px">BO/010/23/2</div>
<div class="t" style="left:236.6px;top:549.2px;">BO</div>
<div class="t" style="left:297.5px;top:549.2px;">010</div>
<div class="t" style="left:170px;width:200px;text-align:right;top:549.2px;">2</div>
<div class="t" style="left:215.2px;width:200px;text-align:right;top:549.2px;">3</div>
<div class="t" style="left:429.6px;top:549.2px;">01.01.2023</div>
<div class="t" style="left:513px;top:549.2px;">11.04.2022</div>
<div class="t" style="left:606px;top:549.2px;letter-spacing:-0.33px;">FSKR numer 22 z dnia 2022-04-11</div>
<div class="t" style="left:725.5px;width:200px;text-align:right;top:549.2px;">1 200,00</div>
<div class="t" style="left:811px;width:200px;text-align:right;top:549.2px;">0,00</div>
<div class="t" style="left:1025.5px;top:549.2px;letter-spacing:-0.6px;">PLN</div>
<div class="cb" style="left:10.6px;top:575.6px"></div>
<div class="t" style="left:70.8px;top:575px;color:#1a1a1a;letter-spacing:0.2px">BO/010/23/2</div>
<div class="t" style="left:236.6px;top:575px;">BO</div>
<div class="t" style="left:297.5px;top:575px;">010</div>
<div class="t" style="left:170px;width:200px;text-align:right;top:575px;">2</div>
<div class="t" style="left:215.2px;width:200px;text-align:right;top:575px;">5</div>
<div class="t" style="left:429.6px;top:575px;">01.01.2023</div>
<div class="t" style="left:513px;top:575px;">11.04.2022</div>
<div class="t" style="left:606px;top:575px;letter-spacing:-0.33px;">KSKR numer 1 z dnia 2022-04-11</div>
<div class="t" style="left:725.5px;width:200px;text-align:right;top:575px;color:#e0403c;">-100,00</div>
<div class="t" style="left:811px;width:200px;text-align:right;top:575px;">0,00</div>
<div class="t" style="left:1025.5px;top:575px;letter-spacing:-0.6px;">PLN</div>
<div class="cb" style="left:10.6px;top:601.4px"></div>
<div class="t" style="left:70.8px;top:600.6px;color:#1a1a1a;letter-spacing:0.2px">BO/010/23/2</div>
<div class="t" style="left:236.6px;top:600.6px;">BO</div>
<div class="t" style="left:297.5px;top:600.6px;">010</div>
<div class="t" style="left:170px;width:200px;text-align:right;top:600.6px;">2</div>
<div class="t" style="left:215.2px;width:200px;text-align:right;top:600.6px;">4</div>
<div class="t" style="left:429.6px;top:600.6px;">01.01.2023</div>
<div class="t" style="left:513px;top:600.6px;">03.06.2022</div>
<div class="t" style="left:606px;top:600.6px;letter-spacing:-0.33px;">KP numer 2 z dnia 2022-06-03</div>
<div class="t" style="left:725.5px;width:200px;text-align:right;top:600.6px;">0,00</div>
<div class="t" style="left:811px;width:200px;text-align:right;top:600.6px;">500,00</div>
<div class="t" style="left:1025.5px;top:600.6px;letter-spacing:-0.6px;">PLN</div>
<svg style="left:0;top:0" width="1550" height="726" fill="none"><path d="M200 546.8000000000001H210.3L214.1 550.6V565.3000000000001H200Z" fill="#fff" stroke="#4a4a4a" stroke-width="1.2" stroke-linejoin="round"/><path d="M210.1 547.0V550.8000000000001H213.9" stroke="#4a4a4a" stroke-width="1.1"/><rect x="203" y="551.2" width="2.8" height="1.6" fill="#666"/><path d="M203 554.6H211" stroke="#777" stroke-width="0.9"/><rect x="201.3" y="556.2" width="11.6" height="3.8" fill="#2a5fa6"/><path d="M201.9 560.0V563.3000000000001H212.3V560.0M207.1 560.0V563.3000000000001" stroke="#6a6a6a" stroke-width="1.1"/><path d="M200 572.6H210.3L214.1 576.4V591.1H200Z" fill="#fff" stroke="#4a4a4a" stroke-width="1.2" stroke-linejoin="round"/><path d="M210.1 572.8V576.6H213.9" stroke="#4a4a4a" stroke-width="1.1"/><rect x="203" y="577.0" width="2.8" height="1.6" fill="#666"/><path d="M203 580.4H211" stroke="#777" stroke-width="0.9"/><rect x="201.3" y="582.0" width="11.6" height="3.8" fill="#2a5fa6"/><path d="M201.9 585.8V589.1H212.3V585.8M207.1 585.8V589.1" stroke="#6a6a6a" stroke-width="1.1"/><path d="M200 598.4000000000001H210.3L214.1 602.2V616.9000000000001H200Z" fill="#fff" stroke="#4a4a4a" stroke-width="1.2" stroke-linejoin="round"/><path d="M210.1 598.6V602.4000000000001H213.9" stroke="#4a4a4a" stroke-width="1.1"/><rect x="203" y="602.8000000000001" width="2.8" height="1.6" fill="#666"/><path d="M203 606.2H211" stroke="#777" stroke-width="0.9"/><rect x="201.3" y="607.8000000000001" width="11.6" height="3.8" fill="#2a5fa6"/><path d="M201.9 611.6V614.9000000000001H212.3V611.6M207.1 611.6V614.9000000000001" stroke="#6a6a6a" stroke-width="1.1"/></svg>
</body></html>
